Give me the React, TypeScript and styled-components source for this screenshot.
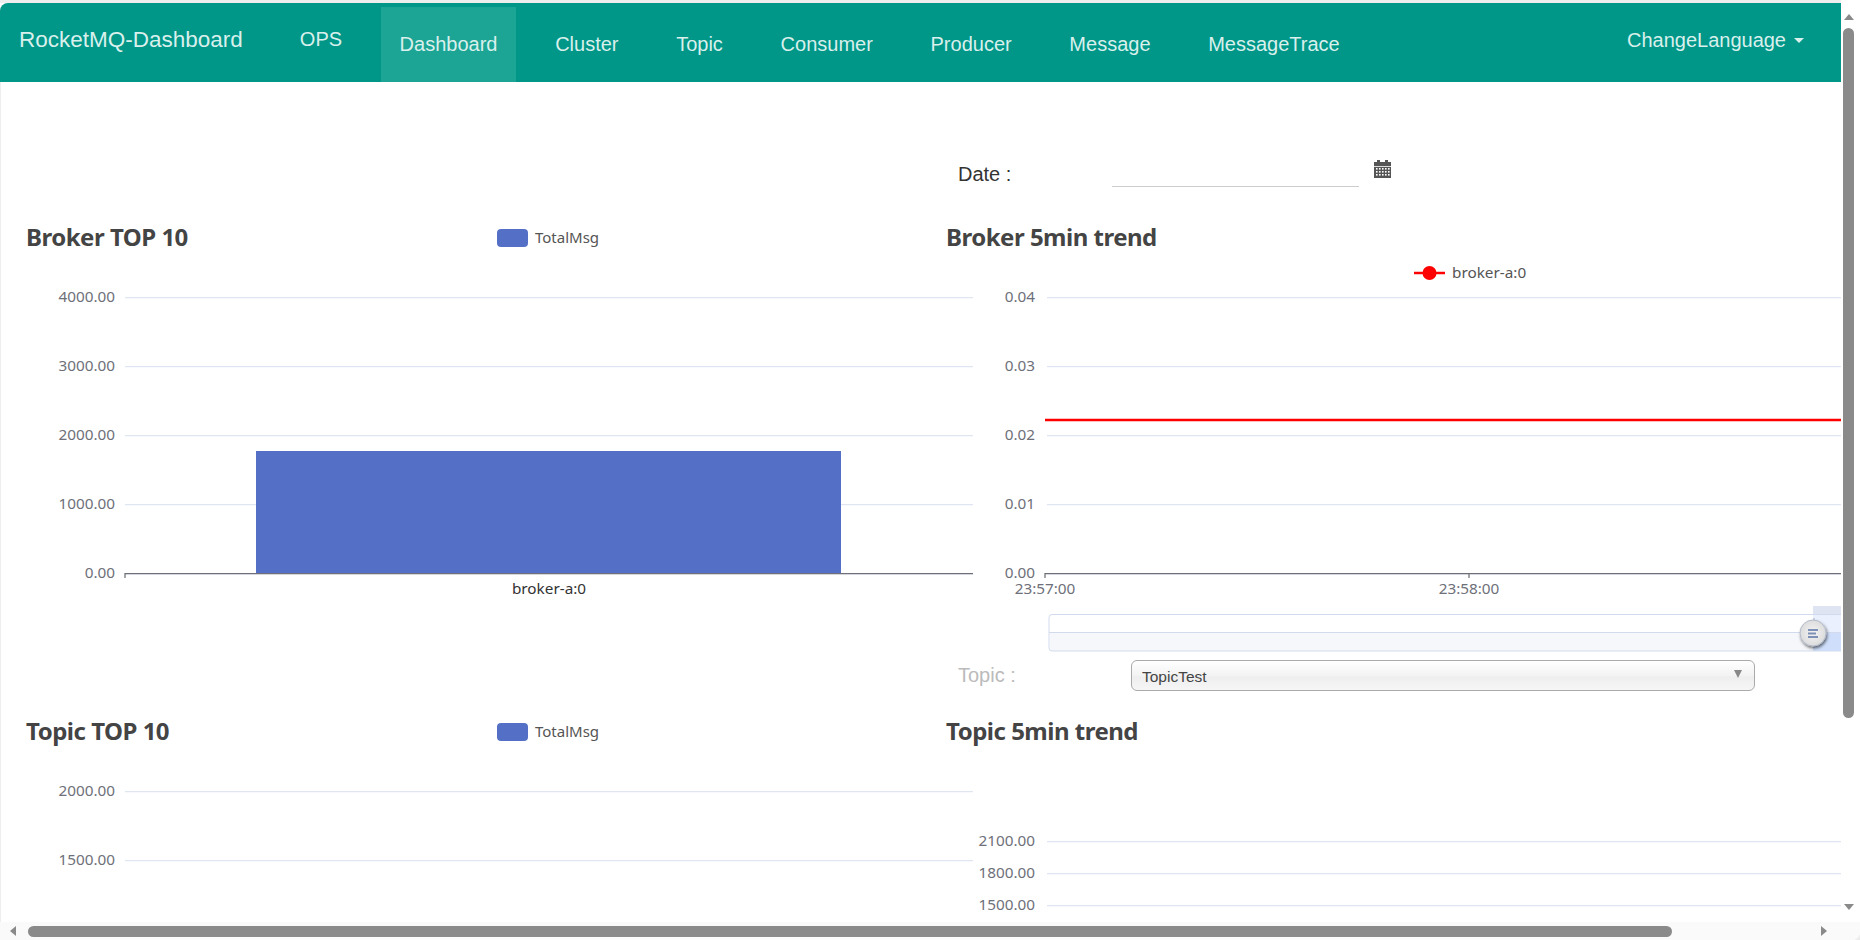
import React from 'react';
import styled, { createGlobalStyle } from 'styled-components';

const GlobalStyle = createGlobalStyle`
  html, body {
    margin: 0;
    padding: 0;
    background: #ececec;
    overflow: hidden;
  }
`;

const Shell = styled.div`
  width: 1860px;
  height: 940px;
  display: flex;
  flex-direction: column;
  background: #fff;
  border-bottom-right-radius: 8px;
  overflow: hidden;
  font-family: 'Liberation Sans', Arial, sans-serif;
`;

const Body = styled.div`
  flex: 1;
  min-height: 0;
  display: flex;
`;

const Viewport = styled.div`
  flex: 1;
  min-width: 0;
  display: flex;
  flex-direction: column;
  padding-top: 3px;
  background: linear-gradient(#eeeeee 3px, #ffffff 3px);
`;

const Navbar = styled.nav`
  height: 79px;
  flex: none;
  display: flex;
  background: #009688;
  border-top-left-radius: 8px;
  color: #d9f0ec;
`;

const Brand = styled.a`
  margin-left: 19px;
  font-size: 22.5px;
  line-height: 74px;
`;

const OpsLink = styled.a`
  margin: 0 39px 0 57px;
  font-size: 20px;
  line-height: 73px;
`;

const NavLink = styled.a<{ $active?: boolean }>`
  margin: 4px 20.7px 0 0;
  padding: 0 18.5px;
  font-size: 20px;
  line-height: 75px;
  background: ${(p) => (p.$active ? '#1ca495' : 'transparent')};
`;

const LangMenu = styled.a`
  margin-left: auto;
  padding-right: 37px;
  display: flex;
  align-items: center;
  gap: 8px;
  height: 74px;
  font-size: 20px;
`;

const Caret = styled.span`
  width: 0;
  height: 0;
  border-left: 5px solid transparent;
  border-right: 5px solid transparent;
  border-top: 5px solid #d9f0ec;
`;

const Content = styled.main`
  flex: 1;
  min-height: 0;
  overflow: hidden;
  display: grid;
  grid-template-columns: 930px 911px;
  grid-template-rows: 133px 445px 49px 213px;
  border-left: 1px solid #eeeeee;
  box-sizing: border-box;
`;

const FilterRow = styled.div<{ $muted?: boolean; $align: string }>`
  grid-column: 2;
  display: flex;
  align-items: ${(p) => p.$align};
  padding-left: 27px;
  font-size: 20px;
  color: ${(p) => (p.$muted ? '#bbbbbb' : '#333333')};
`;

const FilterLabel = styled.label<{ $width: number; $nudge?: number }>`
  width: ${(p) => p.$width}px;
  margin-top: ${(p) => p.$nudge ?? 0}px;
  flex: none;
`;

const DateRow = styled(FilterRow)`
  padding-top: 78px;
`;

const DateInput = styled.div`
  width: 247px;
  height: 26px;
  border-bottom: 1px solid #cccccc;
`;

const CalendarIcon = styled.svg`
  margin-left: 15px;
  flex: none;
`;

const TopicRow = styled(FilterRow)`
  padding-bottom: 18px;
`;

const SelectBox = styled.div`
  width: 624px;
  height: 31px;
  box-sizing: border-box;
  display: flex;
  align-items: center;
  justify-content: space-between;
  padding: 2px 12px 0 10px;
  border: 1px solid #aaaaaa;
  border-radius: 6px;
  background: linear-gradient(#ffffff 0%, #f3f3f3 50%, #eeeeee 55%, #f6f6f6 100%);
  color: #444444;
  font-size: 15.5px;
`;

const SelectArrow = styled.span`
  width: 0;
  height: 0;
  margin-top: -5px;
  border-left: 4px solid transparent;
  border-right: 4px solid transparent;
  border-top: 8px solid #888888;
`;

const Panel = styled.section<{ $col: number }>`
  grid-column: ${(p) => p.$col};
  min-width: 0;
  display: flex;
  flex-direction: column;
`;

const ChartHead = styled.header<{ $indent: number }>`
  height: 44px;
  flex: none;
  box-sizing: border-box;
  display: grid;
  grid-template-columns: 471px auto;
  align-items: center;
  padding: 0 0 2px ${(p) => p.$indent}px;
`;

const Title = styled.h3`
  margin: 0;
  font-family: 'Noto Sans', 'Open Sans', sans-serif;
  font-size: 24px;
  font-weight: 700;
  letter-spacing: -0.5px;
  color: #444444;
`;

const Legend = styled.div`
  display: flex;
  align-items: center;
  gap: 7px;
  margin-top: 4px;
  font-family: 'Noto Sans', 'Open Sans', sans-serif;
  font-size: 15px;
  color: #555555;
`;

const LegendSwatch = styled.span`
  width: 31px;
  height: 18px;
  border-radius: 4px;
  background: #5470c6;
`;

const LegendLabel = styled.span`
  margin-top: -2px;
`;

const Chart = styled.svg`
  display: block;
  flex: none;
  overflow: visible;
`;

const AxisText = styled.text`
  font-family: 'Noto Sans', 'Open Sans', sans-serif;
  font-size: 15.3px;
  fill: #6e7079;
`;

const CategoryText = styled(AxisText)`
  fill: #333333;
`;

const LegendText = styled(AxisText)`
  fill: #555555;
`;

const VScroll = styled.aside`
  width: 19px;
  flex: none;
  display: flex;
  flex-direction: column;
  align-items: center;
  padding: 14px 4px 12px 0;
  box-sizing: border-box;
  background: #ffffff;
`;

const VThumb = styled.div`
  width: 11px;
  height: 690px;
  margin-top: 8px;
  border-radius: 6px;
  background: #8a8a8a;
`;

const Spacer = styled.div`
  flex: 1;
`;

const ScrollArrow = styled.span<{ $dir: 'up' | 'down' | 'left' | 'right' }>`
  width: 0;
  height: 0;
  flex: none;
  border: 5px solid transparent;
  ${(p) =>
    ({
      up: 'border-top-width: 0; border-bottom: 6px solid #8a8a8a;',
      down: 'border-bottom-width: 0; border-top: 6px solid #8a8a8a;',
      left: 'border-left-width: 0; border-right: 6px solid #8a8a8a;',
      right: 'border-right-width: 0; border-left: 6px solid #8a8a8a;',
    })[p.$dir]}
`;

const HScroll = styled.div`
  height: 18px;
  flex: none;
  display: flex;
  align-items: center;
  padding: 0 0 0 10px;
  box-sizing: border-box;
  background: #fafafa;
`;

const HThumb = styled.div`
  width: 1644px;
  height: 11px;
  margin: 0 149px 0 12px;
  border-radius: 6px;
  background: #8a8a8a;
`;

type Tick = { label: string; y: number };

const brokerTicks: Tick[] = [
  { label: '4000.00', y: 39 },
  { label: '3000.00', y: 108 },
  { label: '2000.00', y: 177 },
  { label: '1000.00', y: 246 },
  { label: '0.00', y: 315 },
];

const trendTicks: Tick[] = [
  { label: '0.04', y: 39 },
  { label: '0.03', y: 108 },
  { label: '0.02', y: 177 },
  { label: '0.01', y: 246 },
  { label: '0.00', y: 315 },
];

function GridLines({ ticks, x1, x2, labelX }: { ticks: Tick[]; x1: number; x2: number; labelX: number }) {
  return (
    <>
      {ticks.map((t) => (
        <g key={t.label}>
          <line x1={x1} x2={x2} y1={t.y - 0.5} y2={t.y - 0.5} stroke="#e0e6f1" strokeWidth="1.25" />
          <AxisText x={labelX} y={t.y + 4} textAnchor="end">
            {t.label}
          </AxisText>
        </g>
      ))}
    </>
  );
}

function BrokerTopChart() {
  return (
    <Chart width={930} height={401}>
      <GridLines ticks={brokerTicks} x1={124} x2={972} labelX={114} />
      <rect x={255} y={192} width={585} height={122} fill="#5470c6" />
      <path d="M124 319V314.5H972" fill="none" stroke="#6e7079" strokeWidth="1.25" />
      <CategoryText x={548} y={335} textAnchor="middle">
        broker-a:0
      </CategoryText>
    </Chart>
  );
}

function BrokerTrendChart() {
  return (
    <Chart width={911} height={401}>
      <defs>
        <filter id="handleShadow" x="-50%" y="-50%" width="200%" height="200%">
          <feDropShadow dx="1" dy="2" stdDeviation="1.5" floodColor="#000" floodOpacity="0.55" />
        </filter>
        <radialGradient id="handleFill">
          <stop offset="0" stopColor="#f4f4f4" />
          <stop offset="1" stopColor="#dcdcdc" />
        </radialGradient>
      </defs>
      <GridLines ticks={trendTicks} x1={116} x2={911} labelX={104} />

      <line x1={114} x2={911} y1={161} y2={161} stroke="#ff0000" strokeWidth="2.5" />
      <line x1={483} x2={514} y1={14} y2={14} stroke="#ff0000" strokeWidth="2.5" />
      <circle cx={498.5} cy={14} r={7} fill="#ff0000" />
      <LegendText x={521} y={19}>
        broker-a:0
      </LegendText>

      <path d="M114 319V314.5H911M538 314.5V319" fill="none" stroke="#6e7079" strokeWidth="1.25" />
      <AxisText x={114} y={335} textAnchor="middle">
        23:57:00
      </AxisText>
      <AxisText x={538} y={335} textAnchor="middle">
        23:58:00
      </AxisText>

      {/* data zoom strip */}
      <path d="M119 374H911V392H119Z" fill="#f5f7fb" />
      <rect x={882} y={347} width={29} height={9} fill="#dfe4f2" />
      <rect x={882} y={356} width={29} height={18} fill="#eaf0fd" />
      <rect x={882} y={374} width={29} height={18} fill="#cfdffb" />
      <path d="M911 355.5H121a3 3 0 0 0-3 3V389a3 3 0 0 0 3 3H911" fill="none" stroke="#d2dbee" />
      <line x1={118} x2={911} y1={373.5} y2={373.5} stroke="#d2dbee" />
      <line x1={883} x2={883} y1={359} y2={389} stroke="#a8b4cc" />
      <circle cx={882} cy={374} r={13} fill="url(#handleFill)" stroke="#b4bccb" filter="url(#handleShadow)" />
      <path d="M877 371H887M877 374.5H885M877 378H887" stroke="#7f90b6" strokeWidth="1.8" />
    </Chart>
  );
}

function TopicTopChart() {
  return (
    <Chart width={930} height={169}>
      <GridLines
        ticks={[
          { label: '2000.00', y: 39 },
          { label: '1500.00', y: 108 },
        ]}
        x1={124}
        x2={972}
        labelX={114}
      />
    </Chart>
  );
}

function TopicTrendChart() {
  return (
    <Chart width={911} height={169}>
      <GridLines
        ticks={[
          { label: '2100.00', y: 89 },
          { label: '1800.00', y: 121 },
          { label: '1500.00', y: 153 },
        ]}
        x1={116}
        x2={911}
        labelX={104}
      />
    </Chart>
  );
}

function Calendar() {
  const dots: React.ReactElement[] = [];
  for (let r = 0; r < 3; r++) {
    for (let c = 0; c < 5; c++) {
      dots.push(<rect key={`${r}-${c}`} x={2 + c * 3} y={8 + r * 3} width={1.6} height={1.6} fill="#fff" />);
    }
  }
  return (
    <CalendarIcon width={17} height={18} viewBox="0 0 17 18">
      <path d="M0 2H3V0H6V2H11V0H14V2H17V18H0Z" fill="#555555" />
      <rect y={6} width={17} height={0.8} fill="#fff" />
      {dots}
    </CalendarIcon>
  );
}

const links = ['Cluster', 'Topic', 'Consumer', 'Producer', 'Message', 'MessageTrace'];

export default function App() {
  return (
    <Shell>
      <GlobalStyle />
      <Body>
        <Viewport>
          <Navbar>
            <Brand>RocketMQ-Dashboard</Brand>
            <OpsLink>OPS</OpsLink>
            <NavLink $active>Dashboard</NavLink>
            {links.map((l) => (
              <NavLink key={l}>{l}</NavLink>
            ))}
            <LangMenu>
              ChangeLanguage
              <Caret />
            </LangMenu>
          </Navbar>
          <Content>
            <DateRow $align="flex-start">
              <FilterLabel $width={154} $nudge={3}>
                Date :
              </FilterLabel>
              <DateInput />
              <Calendar />
            </DateRow>

            <Panel $col={1}>
              <ChartHead $indent={25}>
                <Title>Broker TOP 10</Title>
                <Legend>
                  <LegendSwatch />
                  <LegendLabel>TotalMsg</LegendLabel>
                </Legend>
              </ChartHead>
              <BrokerTopChart />
            </Panel>
            <Panel $col={2}>
              <ChartHead $indent={15}>
                <Title>Broker 5min trend</Title>
              </ChartHead>
              <BrokerTrendChart />
            </Panel>

            <TopicRow $muted $align="center">
              <FilterLabel $width={173}>Topic :</FilterLabel>
              <SelectBox>
                TopicTest
                <SelectArrow />
              </SelectBox>
            </TopicRow>

            <Panel $col={1}>
              <ChartHead $indent={25}>
                <Title>Topic TOP 10</Title>
                <Legend>
                  <LegendSwatch />
                  <LegendLabel>TotalMsg</LegendLabel>
                </Legend>
              </ChartHead>
              <TopicTopChart />
            </Panel>
            <Panel $col={2}>
              <ChartHead $indent={15}>
                <Title>Topic 5min trend</Title>
              </ChartHead>
              <TopicTrendChart />
            </Panel>
          </Content>
        </Viewport>
        <VScroll>
          <ScrollArrow $dir="up" />
          <VThumb />
          <Spacer />
          <ScrollArrow $dir="down" />
        </VScroll>
      </Body>
      <HScroll>
        <ScrollArrow $dir="left" />
        <HThumb />
        <ScrollArrow $dir="right" />
      </HScroll>
    </Shell>
  );
}
